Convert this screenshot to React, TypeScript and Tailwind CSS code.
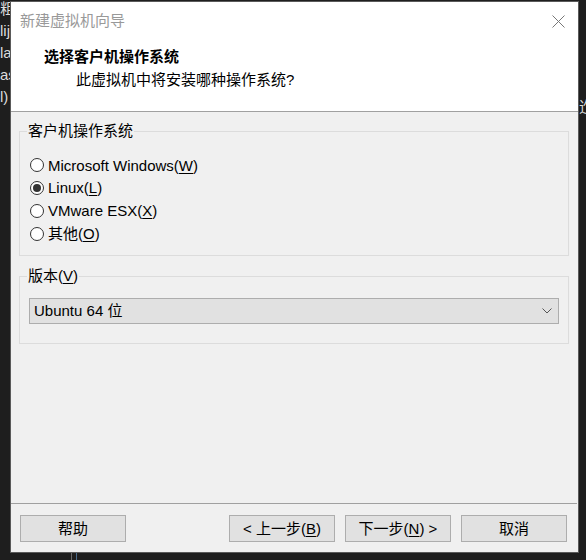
import React from "react";

const font = { fontFamily: '"Liberation Sans", "Noto Sans CJK SC", sans-serif' };

function Radio({ checked, label, accel, h }: { checked?: boolean; label: string; accel: string; h: string }) {
  return (
    <div className={`flex items-center ${h}`}>
      <div className="w-[14px] h-[14px] ml-[1px] rounded-full border border-[#333] bg-white flex items-center justify-center shrink-0">
        {checked && <div className="w-[8px] h-[8px] rounded-full bg-[#333]" />}
      </div>
      <span className="ml-[4px] text-[15px] text-black leading-none">
        {label}(<span className="underline underline-offset-2">{accel}</span>)
      </span>
    </div>
  );
}

function Btn({ children }: { children: React.ReactNode }) {
  return (
    <div className="w-[106px] h-[27px] bg-[#e1e1e1] border border-[#adadad] flex items-center justify-center text-[15px] text-black leading-none">
      {children}
    </div>
  );
}

export default function App() {
  return (
    <div className="w-[586px] h-[560px] bg-[#1e1e1e] flex overflow-hidden" style={font}>
      <div className="w-[10px] shrink-0 flex flex-col text-[15px] text-[#dcdcdc] leading-[22px] overflow-hidden whitespace-nowrap">
        <span className="-mt-[2px]">粗</span>
        <span>lij</span>
        <span>la</span>
        <span>as</span>
        <span>l)</span>
      </div>
      <div className="flex flex-col shrink-0">
        <div className="mt-[1px] w-[569px] h-[552px] border border-[#5a5a5a] bg-[#f0f0f0] flex flex-col">
          <div className="bg-white h-[110px] border-b border-[#a0a0a0] flex flex-col">
            <div className="flex items-center justify-between h-[38px] pl-[9px] pr-[13px]">
              <span className="text-[15px] text-[#999]">新建虚拟机向导</span>
              <svg width="13" height="13" viewBox="0 0 13 13">
                <path d="M0.5 0.5 L12.5 12.5 M12.5 0.5 L0.5 12.5" stroke="#777" strokeWidth="1" />
              </svg>
            </div>
            <div className="pl-[33px] pt-[7px] text-[15px] font-bold text-black leading-[20px]">选择客户机操作系统</div>
            <div className="pl-[65px] pt-[3px] text-[15px] text-black leading-[20px]">此虚拟机中将安装哪种操作系统?</div>
          </div>
          <div className="flex-1 flex flex-col pl-[8px] pr-[9px] pt-[9px]">
            <fieldset className="border border-[#dcdcdc] h-[135px] pl-[9px] pr-[8px] m-0">
              <legend className="text-[15px] text-black px-[1px] -ml-[2px] leading-[20px]">客户机操作系统</legend>
              <div className="flex flex-col pt-[13px]">
                <Radio h="h-[22px]" label="Microsoft Windows" accel="W" />
                <Radio h="h-[23px]" checked label="Linux" accel="L" />
                <Radio h="h-[23px]" label="VMware ESX" accel="X" />
                <Radio h="h-[23px]" label="其他" accel="O" />
              </div>
            </fieldset>
            <fieldset className="border border-[#dcdcdc] h-[78px] pl-[9px] pr-[9px] m-0 mt-[10px]">
              <legend className="text-[15px] text-black px-[1px] -ml-[2px] leading-[20px]">
                版本(<span className="underline underline-offset-2">V</span>)
              </legend>
              <div className="mt-[12px] h-[26px] bg-[#e1e1e1] border border-[#adadad] flex items-center justify-between pl-[4px] pr-[6px]">
                <span className="text-[15px] text-black">Ubuntu 64 位</span>
                <svg width="10" height="6" viewBox="0 0 10 6">
                  <path d="M0.5 0.5 L5 5 L9.5 0.5" stroke="#555" fill="none" strokeWidth="1" />
                </svg>
              </div>
            </fieldset>
          </div>
          <div className="border-t border-[#a0a0a0] mr-[1px] h-[49px] flex items-start pt-[11px] pl-[9px] pr-[10px]">
            <Btn>帮助</Btn>
            <div className="flex-1" />
            <div className="flex gap-[10px]">
              <Btn>&lt; 上一步(<span className="underline underline-offset-2">B</span>)</Btn>
              <Btn>下一步(<span className="underline underline-offset-2">N</span>) &gt;</Btn>
              <Btn>取消</Btn>
            </div>
          </div>
        </div>
        <div className="flex pl-[61px] gap-[4px] flex-1">
          <div className="w-[1px] bg-[#6a6a6a]" />
          <div className="w-[1px] bg-[#4a6a8a]" />
        </div>
      </div>
      <div className="flex-1 pt-[99px] text-[15px] text-[#dcdcdc] overflow-hidden whitespace-nowrap leading-none">迮</div>
    </div>
  );
}
